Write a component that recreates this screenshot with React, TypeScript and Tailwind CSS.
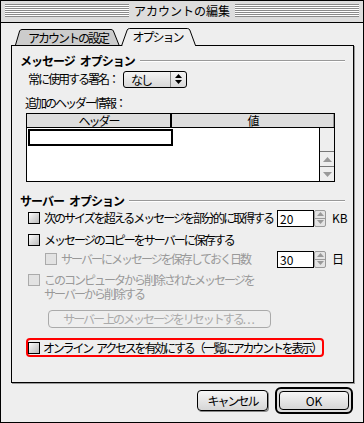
import React from "react"

function Checkbox({ disabled }: { disabled?: boolean }) {
  return disabled ? (
    <span className="block w-[12px] h-[12px] shrink-0 border border-[#aaaaaa] bg-[#e2e2e2]" />
  ) : (
    <span className="block w-[12px] h-[12px] shrink-0 border border-black bg-[linear-gradient(135deg,#ffffff_0%,#dddddd_45%,#bbbbbb_100%)]" />
  )
}

function Stepper() {
  return (
    <div className="flex flex-col w-[12px] h-[17px] border border-[#999999] rounded-[2px] bg-[#e4e4e4]">
      <div className="flex-1 flex items-center justify-center border-b border-[#999999]">
        <svg width="7" height="4" viewBox="0 0 7 4">
          <path d="M3.5 0L7 4H0z" fill="#999999" />
        </svg>
      </div>
      <div className="flex-1 flex items-center justify-center">
        <svg width="7" height="4" viewBox="0 0 7 4">
          <path d="M0 0H7L3.5 4z" fill="#999999" />
        </svg>
      </div>
    </div>
  )
}

function NumberField({ value, unit }: { value: string; unit: string }) {
  return (
    <div className="flex items-center w-[76px] shrink-0">
      <div className="w-[37px] h-[17px] border border-black bg-white pl-[2px] text-[12px] leading-[15px] tracking-normal">
        {value}
      </div>
      <Stepper />
      <span className="ml-[6px] tracking-normal">{unit}</span>
    </div>
  )
}

// visible gap that the narrow tracking would otherwise swallow
function Gap() {
  return <span className="inline-block w-[5px]" />
}

function SectionHeader({ first, second }: { first: string; second: string }) {
  return (
    <div className="flex items-center h-[14px] pl-[8px] pr-[8px]">
      <span className="font-bold tracking-[-1px]">
        {first}
        <Gap />
        {second}
      </span>
      <div className="flex-1 ml-[5px] h-[2px] border-t border-[#999999] border-b border-b-white" />
    </div>
  )
}

export default function App() {
  return (
    <div className="w-[364px] h-[423px] flex flex-col bg-[#eeeeee] border border-black font-['Noto_Sans_CJK_JP','Noto_Sans',sans-serif] text-[12px] leading-[14px] text-black tracking-[-2px]">
      {/* Title bar */}
      <div className="h-[22px] shrink-0 flex items-start pt-[3px] px-[4px] bg-[#dddddd] border-b border-black">
        <div className="flex-1 h-[13px] bg-[repeating-linear-gradient(to_bottom,#8a8a8a_0px,#8a8a8a_1px,#ffffff_1px,#ffffff_2px)]" />
        <span className="px-[5px] text-[12px] leading-[13px] tracking-normal">アカウントの編集</span>
        <div className="flex-1 h-[13px] bg-[repeating-linear-gradient(to_bottom,#8a8a8a_0px,#8a8a8a_1px,#ffffff_1px,#ffffff_2px)]" />
      </div>

      {/* Tabs */}
      <div className="h-[22px] shrink-0 flex pl-[14px]">
        <div className="relative w-[106px] h-[22px] flex items-center justify-center pt-[7px]">
          <svg className="absolute inset-0" width="106" height="22" viewBox="0 0 106 22">
            <path d="M0.5 22 L4.6 8 Q5.2 6.5 7 6.5 L96 6.5 Q97.8 6.5 98.4 8 L104 22" fill="#cccccc" stroke="#000" />
          </svg>
          <span className="relative">アカウントの設定</span>
        </div>
        <div className="relative z-10 w-[76px] h-[23px] flex items-center justify-center pt-[4px] pr-[3px]">
          <svg className="absolute inset-0" width="76" height="23" viewBox="0 0 76 23">
            <path d="M1 23 L6.5 7 Q7.2 5.5 9 5.5 L66 5.5 Q67.8 5.5 68.5 7 L74.5 23 Z" fill="#eeeeee" />
            <path d="M0.5 23 L6.2 7 Q6.9 5.5 8.7 5.5 L66.3 5.5 Q68.1 5.5 68.8 7 L74.5 22.5 L76 22.5" fill="none" stroke="#000" />
          </svg>
          <span className="relative">オプション</span>
        </div>
      </div>

      {/* Panel */}
      <div className="ml-[10px] w-[343px] h-[338px] shrink-0 flex flex-col bg-[#eeeeee] border border-black shadow-[1px_1px_0_#999999]">
        <div className="mt-[8px]">
          <SectionHeader first="メッセージ" second="オプション" />
        </div>

        <div className="mt-[2px] h-[18px] flex items-center pl-[16px]">
          <span>常に使用する署名：</span>
          <div className="ml-[5px] w-[64px] h-[17px] flex border border-black rounded-[3px] bg-[linear-gradient(to_bottom,#f4f4f4,#d8d8d8)]">
            <span className="flex-1 pl-[7px] leading-[15px]">なし</span>
            <div className="w-[16px] flex items-center justify-center border-l border-[#888888]">
              <svg width="7" height="10" viewBox="0 0 7 10">
                <path d="M3.5 0L7 4H0z M0 6H7L3.5 10z" fill="#000" />
              </svg>
            </div>
          </div>
        </div>

        <div className="mt-[8px] h-[14px] pl-[13px]">追加のヘッダー情報：</div>

        {/* Header table */}
        <div className="mt-[3px] ml-[14px] w-[309px] h-[69px] flex flex-col border border-black">
          <div className="h-[14px] flex border-b border-black bg-[#dddddd]">
            <div className="w-[145px] flex items-end justify-center border-r-2 border-black leading-[13px]">ヘッダー</div>
            <div className="flex-1 flex items-end justify-center border-r border-[#999999] leading-[13px]">値</div>
          </div>
          <div className="flex-1 flex">
            <div className="flex-1 bg-white">
              <div className="mt-px ml-px w-[145px] h-[17px] border-2 border-black bg-white" />
            </div>
            <div className="w-[15px] flex flex-col justify-end border-l border-black bg-[#eeeeee]">
              <div className="h-[15px] flex items-center justify-center border-t border-[#777777]">
                <svg width="9" height="5" viewBox="0 0 9 5">
                  <path d="M4.5 0L9 5H0z" fill="#999999" />
                </svg>
              </div>
              <div className="h-[15px] flex items-center justify-center border-t border-[#777777]">
                <svg width="9" height="5" viewBox="0 0 9 5">
                  <path d="M0 0H9L4.5 5z" fill="#999999" />
                </svg>
              </div>
            </div>
          </div>
        </div>

        <div className="mt-[12px]">
          <SectionHeader first="サーバー" second="オプション" />
        </div>

        <div className="mt-[1px] h-[18px] flex items-center pl-[16px]">
          <Checkbox />
          <span className="flex-1 ml-[4px]">次のサイズを超えるメッセージを部分的に取得する</span>
          <NumberField value="20" unit="KB" />
        </div>

        <div className="mt-[4px] h-[18px] flex items-center pl-[16px]">
          <Checkbox />
          <span className="ml-[4px]">メッセージのコピーをサーバーに保存する</span>
        </div>

        <div className="mt-[1px] h-[18px] flex items-center pl-[33px] text-[#999999]">
          <Checkbox disabled />
          <span className="flex-1 ml-[4px]">サーバーにメッセージを保存しておく日数</span>
          <div className="text-black">
            <NumberField value="30" unit="日" />
          </div>
        </div>

        <div className="mt-[5px] flex items-start pl-[16px] text-[#999999]">
          <div className="mt-px">
            <Checkbox disabled />
          </div>
          <div className="ml-[4px] flex flex-col">
            <span className="h-[14px]">このコンピュータから削除されたメッセージを</span>
            <span className="h-[14px]">サーバーから削除する</span>
          </div>
        </div>

        <div className="mt-[9px] ml-[36px] w-[223px] h-[18px] flex items-center justify-center rounded-[4px] border border-[#aaaaaa] bg-[#eeeeee] text-[#aaaaaa]">
          サーバー上のメッセージをリセットする<span className="tracking-[1px]">...</span>
        </div>

        <div className="mt-[10px] ml-[14px] w-[298px] h-[19px] flex items-center border-2 border-[#ff0000] rounded-[4px]">
          <Checkbox />
          <span className="ml-[3px] whitespace-nowrap tracking-[-2.2px]">
            オンライン
            <span className="inline-block w-[4px]" />
            アクセスを有効にする（一覧にアカウントを表示）
          </span>
        </div>
      </div>

      {/* Buttons */}
      <div className="mt-[4px] flex items-center justify-end gap-[7px] pr-[10px]">
        <div className="w-[71px] h-[21px] flex items-center justify-center rounded-[4px] border border-black bg-[linear-gradient(to_bottom,#f6f6f6,#d6d6d6)] shadow-[1px_1px_0_#888888]">
          キャンセル
        </div>
        <div className="w-[78px] h-[27px] flex items-center justify-center rounded-[6px] border-2 border-black bg-[#dddddd]">
          <div className="w-[70px] h-[19px] flex items-center justify-center rounded-[4px] border border-black bg-[linear-gradient(to_bottom,#f6f6f6,#d6d6d6)] font-normal tracking-normal">
            OK
          </div>
        </div>
      </div>
    </div>
  )
}
